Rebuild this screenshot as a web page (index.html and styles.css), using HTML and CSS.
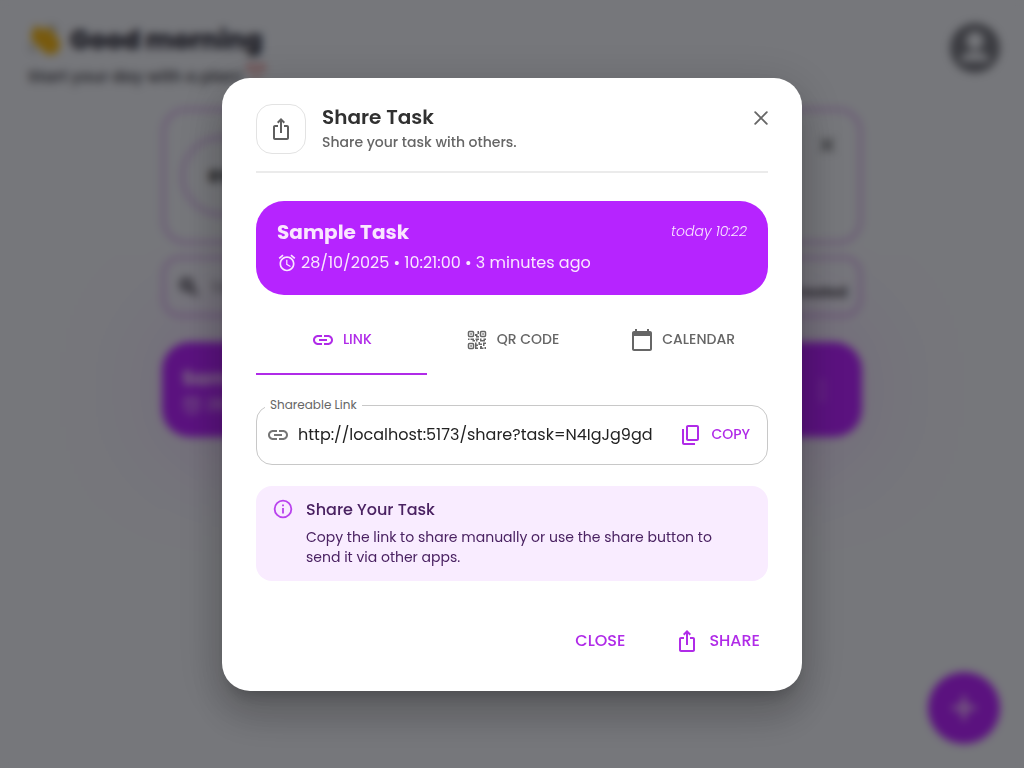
FILE: index.html
```html
<!DOCTYPE html>
<html lang="en">
<head>
<meta charset="utf-8">
<meta name="viewport" content="width=device-width, initial-scale=1">
<title>Share Task</title>
<link rel="stylesheet" href="styles.css">
</head>
<body>
<svg class="sprite" aria-hidden="true">
  <symbol id="share" viewBox="0 0 24 24"><path d="M16 5l-1.42 1.42-1.59-1.59V16h-1.98V4.83L9.42 6.42 8 5l4-4 4 4zm4 5v11c0 1.1-.9 2-2 2H6c-1.1 0-2-.9-2-2V10c0-1.1.9-2 2-2h3v2H6v11h12V10h-3V8h3c1.1 0 2 .9 2 2z"/></symbol>
  <symbol id="link" viewBox="0 0 24 24"><path d="M17 7h-4v2h4c1.65 0 3 1.35 3 3s-1.35 3-3 3h-4v2h4c2.76 0 5-2.24 5-5s-2.24-5-5-5m-6 8H7c-1.65 0-3-1.35-3-3s1.35-3 3-3h4V7H7c-2.76 0-5 2.24-5 5s2.24 5 5 5h4zm-3-4h8v2H8z"/></symbol>
  <symbol id="close" viewBox="0 0 24 24"><path d="M6.2 6.2l11.6 11.6M17.800 6.200L6.200 17.800" fill="none" stroke="currentColor" stroke-width="1.9" stroke-linecap="round"/></symbol>
  <symbol id="alarm" viewBox="0 0 24 24"><path d="m22 5.72-4.6-3.86-1.29 1.53 4.6 3.86zM7.88 3.39 6.6 1.86 2 5.71l1.29 1.53zM12.5 8H11v6l4.75 2.85.75-1.23-4-2.37zM12 4c-4.97 0-9 4.03-9 9s4.02 9 9 9c4.97 0 9-4.03 9-9s-4.03-9-9-9m0 16c-3.87 0-7-3.13-7-7s3.13-7 7-7 7 3.13 7 7-3.13 7-7 7"/></symbol>
</svg>

<div class="page">
  <header class="greeting">
    <div>
      <h1 class="greeting-title">
        <svg class="wave" viewBox="0 0 32 32" aria-hidden="true"><path d="M4 7l4-5 7 5 4-4 9 11c4 7 2 12-3 15-6 2-10-1-13-5L3 16z" fill="#f0b41c"/><path d="M20 2c4 1 6 3 7 7M2 20c0 3 2 6 5 7" fill="none" stroke="#9a9a9a" stroke-width="2"/></svg>
        Good morning
      </h1>
      <p class="greeting-sub">Start your day with a plan! <svg class="clock" viewBox="0 0 16 16" aria-hidden="true"><path d="M0 5a4 4 0 0 1 7-3zM16 5a4 4 0 0 0-7-3z" fill="#d33"/><circle cx="8" cy="9" r="6" fill="#e8cfd4"/></svg></p>
    </div>
    <svg class="avatar" viewBox="2 2 20 20" aria-hidden="true"><path d="M12 2a10 10 0 1 0 0 20 10 10 0 0 0 0-20m0 3.500a3.500 3.500 0 1 1 0 7 3.500 3.500 0 0 1 0-7M6 17.200c0-2.400 4-3.700 6-3.700s6 1.300 6 3.700z"/></svg>
  </header>
  <main class="board">
    <section class="progress"><span class="ring">0%</span><svg class="dismiss"><use href="#close"/></svg></section>
    <section class="search">
      <svg class="search-icon" viewBox="0 0 24 24" aria-hidden="true"><path d="M9.500 4.500a5 5 0 1 0 0 10 5 5 0 0 0 0-10M13.500 13.500L20 20" fill="none" stroke="currentColor" stroke-width="3.500"/></svg>
      <span class="search-hint">Search for task...</span><span class="sort">Date Created</span>
    </section>
    <section class="bg-task">
      <div><h2 class="bg-task-name">Sample</h2><p class="bg-task-date"><svg class="icon-20"><use href="#alarm"/></svg>28/10</p></div>
      <span class="dots">⋮</span>
    </section>
  </main>
  <div class="fab"><svg viewBox="0 0 24 24" aria-hidden="true"><path d="M12 4v16M4 12h16" stroke="currentColor" stroke-width="2.400"/></svg></div>
</div>

<div class="backdrop">
  <div class="dialog" role="dialog" aria-modal="true" aria-labelledby="dialog-title">
    <header class="dialog-head">
      <div class="head-icon"><svg class="icon-24"><use href="#share"/></svg></div>
      <div class="head-text">
        <h2 class="title" id="dialog-title">Share Task</h2>
        <p class="subtitle">Share your task with others.</p>
      </div>
      <button class="close" type="button" aria-label="Close dialog"><svg class="icon-24"><use href="#close"/></svg></button>
    </header>

    <section class="task">
      <div class="task-row"><h3 class="task-name">Sample Task</h3><time class="task-time">today 10:22</time></div>
      <p class="task-date"><svg class="icon-20"><use href="#alarm"/></svg>28/10/2025 • 10:21:00 • 3 minutes ago</p>
    </section>

    <div class="tabs" role="tablist">
      <button class="tab active" type="button" role="tab" aria-selected="true"><svg class="icon-24"><use href="#link"/></svg>LINK</button>
      <button class="tab" type="button" role="tab" aria-selected="false">
        <svg class="icon-24" viewBox="0 0 24 24"><g fill="none" stroke="currentColor" stroke-width="1.500"><rect x="3.500" y="3.500" width="5" height="5" rx="1"/><rect x="15.500" y="3.500" width="5" height="5" rx="1"/><rect x="3.500" y="15.500" width="5" height="5" rx="1"/></g><path d="M5.300 5.300h1.500v1.500H5.300zM17.300 5.300h1.500v1.500h-1.500zM5.300 17.300h1.500v1.500H5.300zM12.500 3H14v3h-1.500v2H14v1.500h-3V8h-1V6h2.500zM3 10.500h1.500V12H3zM5.500 10.500H9V12h1v1.500H7.500V12h-2zM10.500 10.500H14V12h-1.500v1.500H11V12h-.5zM15 10.500h1.500V12h2v-1.500H21V12h-1v1.500h-5zM10 14.500h1.500v2H13V18h-1.500v1.500H13V21h-3zM13.500 14h1.500v1.500h2V17h-3.500zM18 14.500h3V16h-1.500v2H18zM15 18h2v1.500h1.500V21H15zM19.500 19H21v2h-1.500z"/></svg>QR CODE</button>
      <button class="tab" type="button" role="tab" aria-selected="false"><svg class="icon-24" viewBox="0 0 24 24"><path d="M20 3h-1V1h-2v2H7V1H5v2H4c-1.1 0-2 .9-2 2v16c0 1.1.9 2 2 2h16c1.1 0 2-.9 2-2V5c0-1.1-.9-2-2-2m0 18H4V8h16z"/></svg>CALENDAR</button>
    </div>

    <div class="field">
      <label class="field-label" for="share-link">Shareable Link</label>
      <svg class="icon-24 field-icon"><use href="#link"/></svg>
      <input class="field-input" id="share-link" type="text" readonly value="http://localhost:5173/share?task=N4IgJg9gd">
      <button class="copy" type="button"><svg class="icon-24" viewBox="0 0 24 24"><path d="M9 18c-1.100 0-2-.9-2-2V4c0-1.100.9-2 2-2h9c1.100 0 2 .9 2 2v12c0 1.100-.9 2-2 2zm0-2h9V4H9zm-4 6c-1.100 0-2-.9-2-2V6h2v14h11v2z"/></svg>COPY</button>
    </div>

    <section class="info">
      <svg class="icon-22" viewBox="0 0 24 24"><path d="M11 7h2v2h-2zm0 4h2v6h-2z"/><circle cx="12" cy="12" r="9.100" fill="none" stroke="currentColor" stroke-width="2"/></svg>
      <div>
        <h3 class="info-title">Share Your Task</h3>
        <p class="info-text">Copy the link to share manually or use the share button to send it via other apps.</p>
      </div>
    </section>

    <footer class="actions">
      <button class="action" type="button">CLOSE</button>
      <button class="action" type="button"><svg class="icon-24"><use href="#share"/></svg>SHARE</button>
    </footer>
  </div>
</div>
</body>
</html>
```
FILE: styles.css
```css
* { box-sizing: border-box; }
body, h1, h2, h3, p { margin: 0; }
body {
  font-family: Poppins, Inter, "Noto Sans", sans-serif;
  font-size: 16px;
  color: #2f2f33;
  background: #eceef6;
}
button { font: inherit; border: 0; background: none; cursor: pointer; padding: 0; }
svg { fill: currentColor; flex: none; }
.sprite { position: absolute; width: 0; height: 0; }
.icon-20 { width: 20px; height: 20px; }
.icon-22 { width: 22px; height: 22px; }
.icon-24 { width: 24px; height: 24px; }

.page { min-height: 100vh; padding: 20px 24px 0; overflow: hidden; }
.greeting { display: flex; justify-content: space-between; align-items: flex-start; height: 88px; padding-left: 4px; }
.greeting-title { display: flex; align-items: center; gap: 8px; font-size: 26px; line-height: 40px; font-weight: 800; color: #30303f; }
.wave { width: 34px; height: 34px; }
.greeting-sub { margin-top: 4px; font-size: 16px; line-height: 24px; font-weight: 600; color: #55555e; }
.clock { width: 18px; height: 18px; }
.avatar { width: 50px; height: 50px; margin-top: 3px; color: #777882; }
.board { display: flex; flex-direction: column; width: 100%; max-width: 700px; margin: 0 auto; }
.progress, .search { border: 3px solid #cfa3ea; border-radius: 24px; display: flex; }
.progress { height: 136px; justify-content: space-between; padding: 22px 20px 22px 16px; }
.ring { display: grid; place-items: center; align-self: center; width: 80px; height: 80px; border: 3px solid #cfa3ea; border-radius: 50%; font-weight: 800; }
.dismiss { width: 24px; height: 24px; stroke-width: 3; }
.search { height: 61px; margin-top: 12px; align-items: center; padding: 0 12px; border-radius: 18px; }
.search-icon { width: 24px; height: 24px; margin-right: 10px; color: #44444c; }
.search-hint { color: #888891; }
.sort { margin: 12px 0 0 auto; font-size: 14px; font-weight: 600; }
.bg-task { display: flex; justify-content: space-between; align-items: center; height: 95px; margin-top: 25px; padding: 0 28px 0 20px; border-radius: 28px; color: #f8ddff; background: #b624ff; box-shadow: 0 0 128px -32px #b624ff; }
.bg-task-name { font-size: 20px; line-height: 30px; }
.bg-task-date { display: flex; gap: 4px; align-items: center; line-height: 24px; }
.dots { font-size: 24px; }
.fab { position: fixed; right: 24px; bottom: 24px; display: grid; place-items: center; width: 72px; height: 72px; border-radius: 50%; color: #f8ddff; background: #b624ff; }
.fab svg { width: 36px; height: 36px; }

.backdrop { position: fixed; inset: 0; display: flex; align-items: center; justify-content: center; background: rgba(0, 0, 0, .5); backdrop-filter: blur(4px); }
.dialog {
  width: 580px;
  max-width: calc(100% - 64px);
  max-height: calc(100% - 64px);
  padding: 26px 34px;
  border-radius: 28px;
  background: #fff;
  box-shadow: 0 11px 15px -7px rgba(0, 0, 0, .2), 0 24px 38px 3px rgba(0, 0, 0, .14), 0 9px 46px 8px rgba(0, 0, 0, .12);
}
.dialog-head { display: flex; gap: 16px; padding-bottom: 17px; border-bottom: 2px solid #ebebeb; }
.head-icon { display: grid; place-items: center; width: 50px; height: 50px; border: 1px solid #e3e3e3; border-radius: 16px; color: #5f5f5f; }
.head-text { flex: 1; }
.title { font-size: 20px; line-height: 26px; font-weight: 600; color: #303030; }
.subtitle { font-size: 14px; line-height: 24px; font-weight: 500; color: #666; }
.close { align-self: flex-start; width: 24px; height: 24px; margin: 2px -5px 0 0; color: #666; }

.task { min-height: 93px; margin-top: 28px; padding: 16px 21px; border-radius: 28px; color: #fae6ff; background: #b624ff; }
.task-row { display: flex; justify-content: space-between; align-items: flex-start; }
.task-name { font-size: 20px; line-height: 30px; font-weight: 700; }
.task-time { font-size: 14px; line-height: 28px; font-style: italic; font-weight: 300; }
.task-date { display: flex; align-items: center; gap: 4px; line-height: 32px; }

.tabs { display: grid; grid-template-columns: repeat(3, 1fr); margin-top: 10px; }
.tab { display: flex; align-items: center; justify-content: center; gap: 8px; height: 70px; font-size: 14px; font-weight: 500; color: #666; }
.tab.active { color: #b02be8; box-shadow: inset 0 -2px #b02be8; }

.field { position: relative; display: flex; align-items: center; gap: 8px; height: 60px; margin-top: 30px; padding: 0 17px 0 9px; border: 1px solid #c8c8c8; border-radius: 16px; }
.field-label { position: absolute; top: -10px; left: 8px; padding: 0 5px; font-size: 12px; line-height: 18px; color: #666; background: #fff; }
.field-icon { color: #757575; }
.field-input { flex: 1; min-width: 0; padding: 0; border: 0; outline: 0; font: inherit; color: #222; background: none; }
.copy { display: flex; align-items: center; gap: 8px; margin-left: 10px; font-size: 14px; font-weight: 500; color: #b02be8; }

.info { display: flex; gap: 12px; margin-top: 21px; padding: 12px 32px 14px 16px; border-radius: 16px; color: #4a2262; background: #f9ecff; }
.info .icon-22 { color: #b943ee; }
.info-title { font-size: 16px; line-height: 24px; font-weight: 500; }
.info-text { margin-top: 5px; font-size: 14px; line-height: 20px; }

.actions { display: flex; justify-content: flex-end; gap: 34px; margin-top: 36px; }
.action { display: flex; align-items: center; gap: 10px; height: 48px; padding: 0 8px; font-size: 16px; font-weight: 500; color: #b02be8; }
```
